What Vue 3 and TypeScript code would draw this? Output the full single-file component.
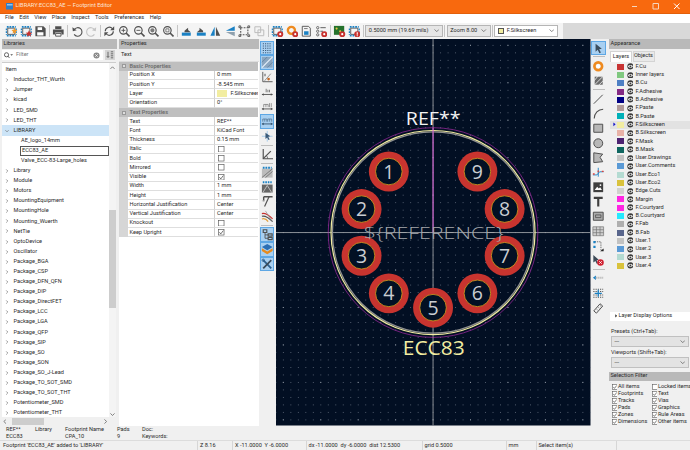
<script setup lang="ts">
type Shape = Record<string, string | number>
type Icon = { s: Shape[]; on?: boolean } | 'sep'

const BL = '#1a81c4'
const DK = '#505050'
const RD = '#c8322f'
const S = (d: string, stroke = DK, w = 1, extra: Shape = {}): Shape => ({ d, stroke, 'stroke-width': w, fill: 'none', ...extra })
const F = (d: string, fill = DK): Shape => ({ d, fill })
const circ = (cx: number, cy: number, r: number) => `M${cx - r} ${cy}a${r} ${r} 0 1 0 ${2 * r} 0a${r} ${r} 0 1 0 ${-2 * r} 0z`

const chip: Shape[] = [
  S('M3 3.5h8v7H3z', DK, 1),
  S('M2 2h10M2 12h10', BL, 2, { 'stroke-dasharray': '2 1' }),
  S('M1.5 4v7M12.5 4v7', BL, 1.4, { 'stroke-dasharray': '2 1' })
]
const badge = (c: string): Shape[] => [F(circ(10.3, 10.3, 3.4), c), F(circ(10.3, 10.3, 1.2), '#fff')]
const lens = (inner: Shape[] = []): Shape[] => [S(circ(6, 6, 4.2), DK, 1.3), S('M9 9l3.8 3.8', DK, 1.8), ...inner]
const plain = (s: Shape[]) => ({ s })

const topIcons: Icon[] = [
  plain([...chip, F('M10.5 3l1 2.3 2.3.4-1.7 1.6.4 2.4-2-1.2-2 1.2.4-2.4-1.7-1.6 2.3-.4z', '#ef9a2e')]),
  plain([...chip, F('M10 6l1.1 2.4 2.5.3-1.8 1.7.5 2.5-2.3-1.2-2.3 1.2.5-2.5-1.8-1.7 2.5-.3z', RD)]),
  plain([F('M1.5 1.5h9l2.5 2.5v8.5h-11.500z'), F('M4 2.500h5v3H4zM3.500 8h7v3.700h-7z', '#fff')]),
  'sep',
  plain([F('M3.500 1.500h7v3h-7zM1 5h12v5.500h-2.500v-2h-7v2H1z'), S('M4 9.500h6v3H4z', DK, 1)]),
  'sep',
  plain([S('M3.500 5a4.800 4.800 0 1 1 0 5.500', DK, 1.2), F('M1.500 2.500l.5 4.500 4.300-1.200z')]),
  plain([S('M10.500 5a4.800 4.800 0 1 0 0 5.500', '#c4c4c4', 1.2), F('M12.500 2.500l-.5 4.500-4.300-1.200z', '#c4c4c4')]),
  'sep',
  plain([S('M2.500 7a4.500 4.500 0 0 1 8-2.800', DK, 1.3), F('M12.500 1.500v4.500H8z'), S('M11.500 7a4.500 4.500 0 0 1-8 2.800', DK, 1.3), F('M1.500 12.500V8H6z')]),
  plain(lens([S('M3.800 6h4.400M6 3.800v4.400', DK, 1)])),
  plain(lens([S('M3.800 6h4.400', DK, 1)])),
  plain(lens([F(circ(6, 6, 2.4), '#7a7a7a')])),
  plain(lens([S('M4.300 4.300h3.400v3.400H4.300z', DK, .8)])),
  'sep',
  plain([F('M2 12V8.500h10V12z', BL), F('M5 6.500L9 3v2.500l3 2.500H5z', DK)]),
  plain([F('M2 12V8.500h10V12z', BL), F('M9 6.500L5 3v2.500L2 8h7z', DK)]),
  plain([F('M6.300 2v10H1.500z', BL), F('M7.700 2v10h4.800z', DK)]),
  plain([F('M2 6.300h10V1.500z', BL), F('M2 7.700h10v4.800z', '#8fa0ad')]),
  plain([S('M3 3h8v8H3z', DK, 1.2, { 'stroke-dasharray': '2 1.300' }), S('M1 1h2v2H1zM11 11h2v2h-2zM1 11h2v2H1zM11 1h2v2h-2z', DK, 1)]),
  plain([S('M2 2h6.500v6.500H2z', '#bdbdbd', 1.1), S('M5.500 5.500H12V12H5.500z', '#bdbdbd', 1.1)]),
  'sep',
  plain([...chip, ...badge(RD)]),
  plain([S(circ(6, 6, 4), '#ee8a1f', 2.6), ...badge(RD)]),
  plain([S('M2.500 1.500h7l2 2v9h-9z', DK, 1), F('M4.500 7h5v4h-5z', BL), S('M4.500 4h4', DK, .8)]),
  plain([S(circ(3, 3, 1.300), DK, .9), S(circ(3, 7, 1.300), DK, .9), S(circ(3, 11, 1.300), DK, .9), S('M6 3h6M6 7h3', DK, 1), ...badge(RD)]),
  'sep',
  plain([F('M1 1h11.500v10H1z', '#25722c'), F(circ(4, 4, 1.200), '#e8c64a'), F(circ(8, 7, 1.200), '#e8c64a'), ...badge(RD)]),
  plain([...chip, F(circ(10.3, 10.3, 3.4), RD), F('M9.700 8h1.200v2.800H9.700zM9.700 11.500h1.200v1H9.700z', '#fff')]),
  'sep'
]

const leftIcons: Icon[] = [
  { on: true, s: [S('M2 2h10M2 4.500h10M2 7h10M2 9.500h10M2 12h10', '#3d5a78', 1.3, { 'stroke-dasharray': '1.300 1.200' })] },
  { on: true, s: [F('M1 1h12v12H1z', '#8ba6c0'), S('M1 13L13 1', '#e8f2fb', 1.3), S('M1 7l6-6M7 13l6-6', '#5e7d9b', .8)] },
  plain([S('M2 1v11h11', DK, 1), S('M4 11L11 3', '#888', 1), F(circ(8.500, 9, 1.500), '#c46a28'), F('M3.500 3h2v3h-2z', '#9a9a9a')]),
  plain([S('M1 9.500h12', DK, 1), F('M1 9.500l2-1.500v3zM13 9.500l-2-1.500v3z'), F('M5.300 3h.9v4h-.9zM7.300 4.200h.9V7h-.9zM9 4.200h.9V7H9z', '#666')]),
  plain([S('M1 10h12', DK, 1), F('M1 10l2-1.500v3zM13 10l-2-1.500v3z'), S('M3 8V5h5v3M5.500 5v3M9.500 3.500V8M11.500 3.500V8', '#777', .8)]),
  { on: true, s: [S('M1 10h12', '#33526f', 1), F('M1 10l2-1.500v3zM13 10l-2-1.500v3z', '#33526f'), S('M2 7.500V4.500h4.500v3M4.200 4.500v3M7.500 7.500V4.500H12v3M9.700 4.500v3', '#577896', .9)] },
  plain([S('M7 1v12M1 7h12', '#8fc0e8', .8), F('M5 3l5.500 4-2.400.6 1.600 3-1.300.7-1.500-3L5 10z', '#3a5a78')]),
  'sep',
  plain([S('M2.500 1v11h11', DK, 1.300), S('M2.500 12L11 3.500', DK, 1.300), S('M7.500 12a5 5 0 0 0-1.500-3.500', DK, .8)]),
  'sep',
  plain([F('M1 3h12v10H1z', '#bcbcbc'), S('M2 2h10', BL, 2.400, { 'stroke-dasharray': '2 1' }), S('M1 13L13 3M5 13l8-7', '#555', .7)]),
  plain([S('M2 1.500h10', BL, 2.200, { 'stroke-dasharray': '1.800 1' }), F('M1 4h12v9H1z', '#666'), S('M2 13l5-8 5 8', '#ddd', .8)]),
  plain([S('M3 2h10M3 2v5', DK, 1.600), S('M9 2L4 13', DK, 1.300), S('M1 6.500h3', '#bbb', 1)]),
  plain([S('M1 4c4-1 8 2 12 6', RD, 1.300), S('M1 7c4-1 8 2 12 6', DK, 1.300), S('M1 10c3-1 5 0 7 3', '#e0a040', 1.300), S('M5 1l7 11', '#888', .7)]),
  'sep',
  { on: true, s: [S('M2.500 2h4v3h-4zM8 6.500h4.500v2.500H8zM8 10.500h4.500V13H8z', DK, 1.300), S('M4.500 5v6.500H8M4.500 7.700H8', DK, 1)] },
  { on: true, s: [F('M7 1l6 3.500-6 3.500-6-3.500z', '#2c6fb4'), F('M1 6l6 3.500L13 6v3l-6 3.500L1 9z', '#e78b1e')] },
  { on: true, s: [S('M2.500 2.500l9 9', '#2c5f8d', 2), S('M11.500 2.500l-9 9', '#3a4a58', 2), S(circ(2.500, 2.500, 1.300), '#2c5f8d', 1)] }
]

const rightIcons: Icon[] = [
  { on: true, s: [F('M4 2l7 5.500-3 .5 2 3.800-1.700.8-1.900-3.800L4 11z', '#3c4d5d')] },
  'sep',
  plain([S(circ(7, 7, 4.300), '#ee8a1f', 3), F(circ(7, 7, 2.300), '#fff')]),
  plain([F('M3 3h9v9H3z', '#6a6a6a'), S('M2 8l5-6M2 13L13 2M7 13l6-6', '#e8e8e8', 1)]),
  'sep',
  plain([S('M2 12L12 2', DK, 1.100)]),
  plain([S('M2.500 13C2.500 7 7 2.500 12.500 2.500', DK, 1.200)]),
  plain([F('M2 2.500h10v9H2z', '#b7b7b7'), S('M2 2.500h10v9H2z', DK, 1.100)]),
  plain([F(circ(7, 7, 5), '#b7b7b7'), S(circ(7, 7, 5), DK, 1.100)]),
  plain([F('M2 2l10 1.500-3 3.500 3 5-10 1z', '#b7b7b7'), S('M2 2l10 1.500-3 3.500 3 5-10 1z', DK, 1.100)]),
  plain([S('M1 10h4.500l3-3.500H13M7 2v10', BL, 1), S('M1 9h2M11 6h2M7 5v2', '#e0403a', 1.500)]),
  plain([F('M1.500 1.500h11v11h-11z', '#3f3f3f'), F('M3 10l2.800-3.500 1.800 2 1.500-1.500 2 3z', '#fff'), F(circ(9.500, 4.500, 1), '#fff')]),
  plain([F('M2 2h10v2.500H8.200V13H5.800V4.500H2z', '#3f3f3f')]),
  plain([F('M1.500 2.500h11v9h-11z', '#aaa'), S('M1.500 2.500h11v9h-11z', DK, 1.100), S('M4 5.500h6v3H4z', DK, .9)]),
  plain([F('M1 2h12v10H1z', '#cfcfcf'), S('M1 2h12v10H1zM1 5.300h12M1 8.600h12M5 2v10M9 2v10', '#777', .8)]),
  plain([S('M3 2h7v9', DK, .9, { 'stroke-dasharray': '1.500 1' }), F('M1.500 1h2.500v2.500H1.500zM1.500 6.500h2.500V9H1.500z', BL), F('M9 12.500l4-3v3z', '#222')]),
  plain([F('M1.500 1l6 5.500-2.300.5 1.600 3.500-1.500.5-1.500-3.300-2.300 1.800z', '#3d4a57'), F(circ(9.500, 9.500, 3.700), '#d02030'), S('M8 8l3 3M11 8l-3 3', '#fff', .9)]),
  'sep',
  plain([F('M1 6.500l3.500-2.500v5z', BL), S('M4 6.500h9', '#bbb', 2.200, { 'stroke-dasharray': '1.500 .7' })]),
  plain([S('M1.500 2.500h11M1.500 5h11M1.500 9h11M1.500 11.500h11', DK, 1.200, { 'stroke-dasharray': '1.300 1.200' }), S('M7 3v8M3 7h8', BL, 1.400)]),
  plain([S('M2 10l7-8 3 2.500-7 8z', DK, 1.100), S('M5 8l1.300 1M7 6l1.300 1M9 4l1.300 1', DK, .7)])
]

const treeItems = [
  ['Inductor_THT_Wurth'], ['Jumper'], ['kicad'], ['LED_SMD'], ['LED_THT'], ['LIBRARY', 'sel'],
  ['AE_logo_14mm', 'child'], ['ECC83_AE', 'edit'], ['Valve_ECC-83-Large_holes', 'child'],
  ['Library'], ['Module'], ['Motors'], ['MountingEquipment'], ['MountingHole'], ['Mounting_Wuerth'], ['NetTie'],
  ['OptoDevice'], ['Oscillator'], ['Package_BGA'], ['Package_CSP'], ['Package_DFN_QFN'], ['Package_DIP'],
  ['Package_DirectFET'], ['Package_LCC'], ['Package_LGA'], ['Package_QFP'], ['Package_SIP'], ['Package_SO'],
  ['Package_SON'], ['Package_SO_J-Lead'], ['Package_TO_SOT_SMD'], ['Package_TO_SOT_THT'], ['Potentiometer_SMD'], ['Potentiometer_THT']
]

type Row = { k: string; v?: string; head?: boolean; cb?: boolean; on?: boolean; swatch?: boolean }
const propRows: Row[] = [
  { k: 'Basic Properties', head: true },
  { k: 'Position X', v: '0 mm' },
  { k: 'Position Y', v: '-8.545 mm' },
  { k: 'Layer', v: 'F.Silkscreen', swatch: true },
  { k: 'Orientation', v: '0°' },
  { k: 'Text Properties', head: true },
  { k: 'Text', v: 'REF**' },
  { k: 'Font', v: 'KiCad Font' },
  { k: 'Thickness', v: '0.15 mm' },
  { k: 'Italic', cb: true },
  { k: 'Bold', cb: true },
  { k: 'Mirrored', cb: true },
  { k: 'Visible', cb: true, on: true },
  { k: 'Width', v: '1 mm' },
  { k: 'Height', v: '1 mm' },
  { k: 'Horizontal Justification', v: 'Center' },
  { k: 'Vertical Justification', v: 'Center' },
  { k: 'Knockout', cb: true },
  { k: 'Keep Upright', cb: true, on: true }
]

const layers = [
  ['F.Cu', '#c83434'], ['Inner layers', '#7fc87f'], ['B.Cu', '#4d7fc4'], ['F.Adhesive', '#842a84'], ['B.Adhesive', '#000084'],
  ['F.Paste', '#b09a9a'], ['B.Paste', '#00b0b8'], ['F.Silkscreen', '#f2eda1'], ['B.Silkscreen', '#e8b2a7'], ['F.Mask', '#4d2372'],
  ['B.Mask', '#0f6660'], ['User.Drawings', '#c2c2c2'], ['User.Comments', '#5a9ad6'], ['User.Eco1', '#b4dbd2'], ['User.Eco2', '#d9c23c'],
  ['Edge.Cuts', '#d0d2cd'], ['Margin', '#ff26e2'], ['F.Courtyard', '#ff26e2'], ['B.Courtyard', '#26e9ff'], ['F.Fab', '#afafaf'],
  ['B.Fab', '#58658c'], ['User.1', '#c2c2c2'], ['User.2', '#5a9ad6'], ['User.3', '#b4dbd2'], ['User.4', '#d9c23c']
]

const filters: [string, boolean][] = [
  ['All items', true], ['Locked items', false], ['Footprints', true], ['Text', true], ['Tracks', true], ['Vias', true],
  ['Pads', true], ['Graphics', true], ['Zones', true], ['Rule Areas', true], ['Dimensions', true], ['Other items', true]
]

const pads = [
  ['1', 388, 171.7], ['2', 360.7, 209.3], ['3', 360.7, 256], ['4', 388, 293.7], ['5', 432.3, 308],
  ['6', 476.7, 293.7], ['7', 504, 256], ['8', 504, 209.3], ['9', 476.7, 171.7]
] as [string, number, number][]

const menus = ['File', 'Edit', 'View', 'Place', 'Inspect', 'Tools', 'Preferences', 'Help']
const statusCells = [
  ['s1', "Footprint 'ECC83_AE' added to 'LIBRARY'"], ['s2', 'Z 8.16'], ['s3', 'X -11.0000  Y -6.0000'],
  ['s4', 'dx -11.0000  dy -6.0000  dist 12.5300'], ['s5', 'grid 0.5000'], ['s6', 'mm'], ['s7', 'Select item(s)'], ['s8', '']
]
</script>

<template>
  <div class="app">
    <header class="title">
      <svg class="winicon" viewBox="0 0 8 7"><path d="M0 0h8v7H0z" fill="#2f7fc9" /><path d="M1 1.500h6v1H1z" fill="#dfeefa" /></svg>
      <span class="title-text">LIBRARY:ECC83_AE — Footprint Editor</span>
      <svg class="winbtns" viewBox="0 0 50 8">
        <path d="M0 4.500h5" stroke="#f6d5bd" fill="none" />
        <path d="M21 1.500h5.500v5.500H21z" stroke="#f6d5bd" fill="none" />
        <path d="M42 1.500l5.500 5.500M47.500 1.500L42 7" stroke="#fff" fill="none" />
      </svg>
    </header>

    <nav class="menu"><span v-for="m in menus" :key="m">{{ m }}</span></nav>

    <div class="toolbar">
      <div class="tools">
        <template v-for="(ic, i) in topIcons" :key="i">
          <i v-if="ic === 'sep'" class="vsep"></i>
          <svg v-else class="tico" viewBox="0 0 14 14"><path v-for="(p, j) in ic.s" :key="j" v-bind="p" /></svg>
        </template>
        <div class="combo grey c1"><span>0.5000 mm (19.69 mils)</span><svg class="chev" viewBox="0 0 6 4"><path d="M.5.500L3 3 5.500.500" fill="none" stroke="#555" stroke-width=".8" /></svg></div>
        <i class="vsep tight"></i>
        <div class="combo grey c2"><span>Zoom 8.00</span><svg class="chev" viewBox="0 0 6 4"><path d="M.5.500L3 3 5.500.500" fill="none" stroke="#555" stroke-width=".8" /></svg></div>
        <i class="vsep tight"></i>
        <div class="combo c3"><i class="lsw"></i><span>F.Silkscreen</span><svg class="chev" viewBox="0 0 6 4"><path d="M.5.500L3 3 5.500.500" fill="none" stroke="#555" stroke-width=".8" /></svg></div>
      </div>
      <div class="tool-rest"></div>
    </div>

    <main class="main">
      <section class="libs">
        <h2 class="strip">Libraries</h2>
        <div class="filter">
          <div class="search">
            <svg class="mag" viewBox="0 0 10 7"><path d="M.5 3a2.300 2.300 0 1 0 4.600 0a2.300 2.300 0 1 0-4.600 0M4.500 4.500L6 6.500" fill="none" stroke="#444" stroke-width=".9" /><path d="M7 2.500h3L8.500 4z" fill="#555" /></svg>
            <span class="ph">Filter</span>
            <svg class="clr" viewBox="0 0 8 8"><circle cx="4" cy="4" r="3.500" fill="#8a8a8a" /><path d="M2.500 2.500l3 3M5.500 2.500l-3 3" stroke="#fff" stroke-width=".8" /></svg>
          </div>
          <div class="fbtn"><svg viewBox="0 0 10 10"><path d="M2.500 1v7M1 6.500L2.500 8 4 6.500M6 1h3M6 3.500h3M6 6h3M6 8.500h3" stroke="#444" fill="none" stroke-width=".9" /></svg></div>
        </div>
        <div class="tree">
          <div class="tree-body">
            <div class="tree-list">
              <div class="titem head">Item</div>
              <div v-for="t in treeItems" :key="t[0]" class="titem" :class="t[1]">
                <svg v-if="!t[1] || t[1] === 'sel'" class="tw" viewBox="0 0 5 5"><path :d="t[1] === 'sel' ? 'M.5 1.500L2.500 3.500 4.500 1.500' : 'M1.500.5L3.500 2.500 1.500 4.500'" fill="none" stroke="#555" stroke-width=".7" /></svg>
                <span>{{ t[0] }}</span>
              </div>
            </div>
            <div class="vscroll">
              <svg viewBox="0 0 6 4" class="arr"><path d="M.5 3.500L3 1l2.500 2.500" fill="none" stroke="#444" stroke-width=".8" /></svg>
              <i class="vthumb"></i>
              <svg viewBox="0 0 6 4" class="arr"><path d="M.5.500L3 3l2.500-2.500" fill="none" stroke="#444" stroke-width=".8" /></svg>
            </div>
          </div>
          <div class="hscroll">
            <svg viewBox="0 0 4 6" class="harr"><path d="M3.500.5L1 3l2.500 2.500" fill="none" stroke="#444" stroke-width=".8" /></svg>
            <i class="hthumb"></i>
            <svg viewBox="0 0 4 6" class="harr"><path d="M.5.500L3 3 .5 5.500" fill="none" stroke="#444" stroke-width=".8" /></svg>
          </div>
        </div>
      </section>

      <section class="props">
        <h2 class="strip">Properties</h2>
        <div class="ptitle">Text</div>
        <div class="pgrid">
          <div v-for="r in propRows" :key="r.k" class="prow" :class="{ phead: r.head }">
            <template v-if="r.head">
              <i class="minus"></i><span>{{ r.k }}</span>
            </template>
            <template v-else>
              <span class="pk">{{ r.k }}</span>
              <span class="pv">
                <i v-if="r.swatch" class="psw"></i>
                <svg v-if="r.cb" class="cb" viewBox="0 0 7 7"><rect x=".5" y=".5" width="6" height="6" fill="#fff" stroke="#555" stroke-width=".7" /><path v-if="r.on" d="M1.500 3.500l1.500 1.800 2.700-3.600" fill="none" stroke="#444" stroke-width=".8" /></svg>
                <template v-else>{{ r.v }}</template>
              </span>
            </template>
          </div>
        </div>
      </section>

      <aside class="vtools">
        <template v-for="(ic, i) in leftIcons" :key="i">
          <i v-if="ic === 'sep'" class="hsep"></i>
          <div v-else class="vbtn" :class="{ on: ic.on }"><svg viewBox="0 0 14 14"><path v-for="(p, j) in ic.s" :key="j" v-bind="p" /></svg></div>
        </template>
      </aside>

      <svg class="canvas" viewBox="275 39 315 387" preserveAspectRatio="none">
        <defs>
          <pattern id="minor" width="7.5" height="7.5" patternUnits="userSpaceOnUse" patternTransform="translate(431.900 232.400)"><rect width=".9" height=".9" fill="#5d6878" /></pattern>
          <pattern id="major" width="37.5" height="37.500" patternUnits="userSpaceOnUse" patternTransform="translate(431.800 232.300)"><rect width="1" height="1" fill="#8f98a3" /></pattern>
        </defs>
        <rect x="275" y="39" width="315" height="387" fill="#020f23" />
        <rect x="275" y="39" width="315" height="387" fill="url(#minor)" />
        <rect x="275" y="39" width="315" height="387" fill="url(#major)" />
        <path d="M275 232.800H590M432.300 39V426" stroke="#9a9ea4" stroke-width=".9" fill="none" />
        <circle cx="432.300" cy="232.800" r="105" fill="none" stroke="#a52aa5" stroke-width=".7" />
        <circle cx="432.300" cy="232.800" r="100.800" fill="none" stroke="#8f9090" stroke-width="1.300" />
        <circle cx="432.300" cy="232.800" r="102.200" fill="none" stroke="#f2eda1" stroke-width="1.200" />
        <path d="M432.300 128V232.800" stroke="#d050d0" stroke-width="1" fill="none" />
        <g v-for="p in pads" :key="p[0]">
          <circle :cx="p[1]" :cy="p[2]" r="20" fill="#c8342f" />
          <circle :cx="p[1]" :cy="p[2]" r="13.300" fill="#021024" stroke="#dca01e" stroke-width=".8" />
          <text :x="p[1]" :y="p[2] + 7" class="padnum" text-anchor="middle">{{ p[0] }}</text>
        </g>
        <text x="433" y="232.800" dy="6.300" class="reftext" text-anchor="middle" textLength="140" lengthAdjust="spacingAndGlyphs">${REFERENCE}</text>
        <text x="432.500" y="125" class="refstar" text-anchor="middle" textLength="55" lengthAdjust="spacingAndGlyphs">REF**</text>
        <text x="433" y="355" class="ecc" text-anchor="middle" textLength="62" lengthAdjust="spacingAndGlyphs">ECC83</text>
      </svg>

      <aside class="vtools right">
        <template v-for="(ic, i) in rightIcons" :key="i">
          <i v-if="ic === 'sep'" class="hsep"></i>
          <div v-else class="vbtn" :class="{ on: ic.on }"><svg viewBox="0 0 14 14"><path v-for="(p, j) in ic.s" :key="j" v-bind="p" /></svg></div>
        </template>
      </aside>

      <section class="appear">
        <h2 class="strip">Appearance</h2>
        <div class="tabs"><span class="tab act">Layers</span><span class="tab">Objects</span></div>
        <div class="layers">
          <div v-for="l in layers" :key="l[0]" class="lrow" :class="{ cur: l[0] === 'F.Silkscreen' }">
            <svg class="cursor" viewBox="0 0 4 6"><path v-if="l[0] === 'F.Silkscreen'" d="M.5.500L3.500 3 .5 5.500z" fill="#1414c8" /></svg>
            <i class="sw" :style="{ background: l[1] }"></i>
            <svg class="eye" viewBox="0 0 8 8"><circle cx="4" cy="4" r="3.600" fill="#3a3a3a" /><path d="M1 4c1.500-2 4.500-2 6 0-1.500 2-4.500 2-6 0z" fill="#eee" /><circle cx="4" cy="4" r="1.100" fill="#3a3a3a" /></svg>
            <span>{{ l[0] }}</span>
          </div>
        </div>
        <div class="ldo"><svg viewBox="0 0 4 6"><path d="M.5.500L3.500 3 .5 5.500z" fill="#222" /></svg><span>Layer Display Options</span></div>
        <div class="presets">
          <label>Presets (Ctrl+Tab):</label>
          <div class="pcombo"><span>---</span><svg class="chev" viewBox="0 0 6 4"><path d="M.5.500L3 3 5.500.500" fill="none" stroke="#555" stroke-width=".8" /></svg></div>
          <label>Viewports (Shift+Tab):</label>
          <div class="pcombo"><span>---</span><svg class="chev" viewBox="0 0 6 4"><path d="M.5.500L3 3 5.500.500" fill="none" stroke="#555" stroke-width=".8" /></svg></div>
        </div>
        <h2 class="strip sf">Selection Filter</h2>
        <div class="fgrid">
          <div v-for="f in filters" :key="f[0]" class="fitem">
            <svg class="cb small" viewBox="0 0 7 7"><rect x=".5" y=".5" width="6" height="6" fill="#fff" stroke="#555" stroke-width=".7" /><path v-if="f[1]" d="M1.500 3.500l1.500 1.800 2.700-3.600" fill="none" stroke="#444" stroke-width=".8" /></svg>
            <span>{{ f[0] }}</span>
          </div>
        </div>
      </section>
    </main>

    <div class="info">
      <div class="icol w29"><span>REF**</span><span>ECC83</span></div>
      <div class="icol w30"><span>Library</span><span></span></div>
      <div class="icol w52"><span>Footprint Name</span><span>CPA_10</span></div>
      <div class="icol w25"><span>Pads</span><span>9</span></div>
      <div class="icol"><span>Doc:</span><span>Keywords:</span></div>
    </div>

    <footer class="status">
      <span v-for="c in statusCells" :key="c[0]" class="scell" :class="c[0]">{{ c[1] }}</span>
    </footer>
  </div>
</template>

<style>
html, body { margin: 0; padding: 0; background: #f0f0f0; }
</style>

<style scoped>
.app { width: 690px; height: 450px; overflow: hidden; display: flex; flex-direction: column; background: #f0f0f0; font-family: Roboto, "Noto Sans", sans-serif; font-size: 5.600px; color: #2a2a2a; line-height: 1; }
h2 { margin: 0; font: inherit; }
i { font-style: normal; display: block; flex: none; }
svg { display: block; flex: none; }

.title { height: 13.500px; flex: none; background: #f8690e; display: flex; align-items: center; padding-left: 5.500px; color: #fbe6d8; border-bottom: .5px solid #e25f0b; box-sizing: border-box; }
.winicon { width: 7.500px; height: 6.500px; margin-right: 2.500px; }
.title-text { flex: 1; font-size: 5.700px; }
.winbtns { width: 50px; height: 8px; margin-right: 8px; }

.menu { height: 9.500px; flex: none; background: #fff; display: flex; align-items: center; gap: 5.500px; padding-left: 5px; font-size: 5.600px; }

.toolbar { height: 16px; flex: none; display: flex; background: #d9d9d9; }
.tools { width: 563px; flex: none; display: flex; align-items: center; padding-left: 4px; box-sizing: border-box; background: #f4f4f4; }
.tool-rest { flex: 1; }
.tico { width: 12.500px; height: 12.500px; padding: 0 1.050px; }
.vsep { width: 1px; height: 12px; margin: 0 1.300px; background: #c4c4c4; }
.vsep.tight { margin: 0 1px 0 1px; }
.combo { height: 11.500px; display: flex; align-items: center; justify-content: space-between; padding: 0 3px 0 2.500px; box-sizing: border-box; border: .5px solid #b5b5b5; background: #fff; font-size: 5.600px; margin-left: .5px; }
.combo.grey { background: #e6e6e6; }
.c1 { width: 78px; }
.c2 { width: 44px; }
.c3 { width: 64px; justify-content: flex-start; }
.c3 .chev { margin-left: auto; }
.lsw { width: 6.500px; height: 6.500px; background: #f2eda1; border: .5px solid #555; margin-right: 2.500px; box-sizing: border-box; }
.chev { width: 5.500px; height: 3.500px; }

.main { flex: 1; min-height: 0; display: flex; }

.strip { height: 9.500px; flex: none; background: #b9b9b9; display: flex; align-items: center; padding-left: 2px; font-size: 5.600px; color: #2a2a2a; }

.libs { width: 116.500px; flex: none; display: flex; flex-direction: column; padding-left: 1.500px; box-sizing: border-box; }
.filter { height: 13px; flex: none; display: flex; align-items: center; gap: 1.500px; }
.search { width: 101.500px; height: 10.500px; background: #fff; display: flex; align-items: center; padding: 0 3px 0 2.500px; box-sizing: border-box; }
.mag { width: 9px; height: 6.500px; margin-right: 3px; }
.ph { flex: 1; color: #777; }
.clr { width: 7px; height: 7px; }
.fbtn { width: 10px; height: 10.500px; background: #d4d4d4; display: flex; align-items: center; justify-content: center; }
.fbtn svg { width: 8px; height: 8px; }
.tree { flex: 1; min-height: 0; background: #fff; margin-right: .5px; display: flex; flex-direction: column; border-top: .5px solid #ccc; }
.tree-body { flex: 1; min-height: 0; display: flex; }
.tree-list { flex: 1; min-width: 0; padding-top: 2.400px; overflow: hidden; }
.titem { height: 10.100px; display: flex; align-items: center; padding-left: 3.500px; white-space: nowrap; box-sizing: border-box; }
.titem.head { padding-left: 4px; }
.tw { width: 4px; height: 4px; margin-right: 4.500px; }
.titem.sel { background: #cce4f7; }
.titem.child, .titem.edit { padding-left: 19.500px; }
.titem.edit { margin-left: 18.500px; padding-left: 1px; border: .6px solid #555; }
.vscroll { width: 7.500px; flex: none; display: flex; flex-direction: column; align-items: center; background: #f4f4f4; padding: 3px 0 1px; box-sizing: border-box; }
.arr { width: 5px; height: 3.300px; flex: none; }
.vthumb { width: 6.500px; height: 98px; background: #cdcdcd; margin-top: 141px; margin-bottom: auto; }
.hscroll { height: 8.500px; flex: none; background: #f0f0f0; display: flex; align-items: center; padding: 0 9px 0 1px; }
.harr { width: 3.500px; height: 5px; }
.hthumb { width: 32px; height: 7.500px; background: #cdcdcd; margin: 0 auto 0 6px; }

.props { width: 139.500px; flex: none; margin-left: 2.500px; display: flex; flex-direction: column; }
.ptitle { height: 13.200px; flex: none; display: flex; align-items: center; padding-left: 2px; background: #efefef; border-bottom: .5px solid #ddd; box-sizing: border-box; }
.pgrid { flex: 1; min-height: 0; background: #fff; padding-right: 1px; }
.prow { height: 9.250px; display: flex; align-items: stretch; background: #d6d6d6; padding-left: 8.500px; box-sizing: border-box; }
.pk { width: 87.500px; flex: none; background: #fff; display: flex; align-items: center; padding-left: 2px; box-sizing: border-box; border-bottom: .5px solid #dedede; border-right: .5px solid #cfcfcf; white-space: nowrap; }
.pv { flex: 1; min-width: 0; background: #fff; display: flex; align-items: center; padding-left: 2px; border-bottom: .5px solid #dedede; white-space: nowrap; overflow: hidden; }
.phead { background: #bfbfbf; padding-left: 2.500px; align-items: center; color: #6c6c6c; font-weight: 600; }
.minus { width: 4px; height: 4px; background: #dedede; margin-right: 4px; border: .5px solid #999; box-sizing: border-box; }
.psw { width: 10px; height: 7.500px; background: #f2eda1; margin-right: 3.500px; }
.cb { width: 6.500px; height: 6.500px; margin-left: 1px; }

.vtools { width: 17.500px; flex: none; display: flex; flex-direction: column; align-items: center; padding: 1.500px 1px 0 0; box-sizing: border-box; background: #f0f0f0; }
.vbtn { width: 14.500px; height: 14.700px; flex: none; display: flex; align-items: center; justify-content: center; box-sizing: border-box; }
.vbtn svg { width: 12.500px; height: 12.500px; }
.vbtn.on { background: #a9d0f1; border: .7px solid #5ea7e4; }
.hsep { width: 12px; height: 1px; margin: 1.250px 0; background: #bdbdbd; }
.right { width: 15px; padding-right: 0; margin-left: .5px; }

.canvas { width: 314.500px; flex: none; height: 100%; }
.padnum { font: 400 19.500px "Open Sans", sans-serif; fill: #c9cdd2; }
.reftext { font: 300 17px "Open Sans", sans-serif; fill: #a6a9ad; }
.refstar { font: 400 18px "Open Sans", sans-serif; fill: #f4f4f4; }
.ecc { font: 400 19.500px "Open Sans", sans-serif; fill: #f2eda1; }

.appear { width: 83px; flex: none; margin-left: 2.500px; display: flex; flex-direction: column; }
.tabs { height: 14px; flex: none; display: flex; align-items: flex-start; padding: 2.500px 0 0 1.500px; gap: .5px; box-sizing: border-box; }
.tab { height: 10.500px; width: 22px; display: flex; align-items: center; justify-content: center; background: #e9e9e9; border: .4px solid #d4d4d4; box-sizing: border-box; }
.tab.act { background: #fff; border-bottom: 0; }
.layers { flex: 1; min-height: 0; margin-left: 1.500px; }
.lrow { height: 8.300px; display: flex; align-items: center; padding-left: 2.500px; box-sizing: border-box; }
.lrow.cur { background: #e2e2e2; }
.cursor { width: 3px; height: 4.500px; margin-right: 1.800px; }
.sw { width: 7px; height: 6px; margin-right: 2.300px; }
.eye { width: 6.800px; height: 6.800px; margin-right: 2px; }
.ldo { height: 9px; flex: none; background: #fff; margin-left: 1px; display: flex; align-items: center; padding-left: 5px; font-size: 5.600px; }
.ldo svg { width: 2.500px; height: 3.800px; margin-right: 1.500px; }
.presets { height: 51px; flex: none; display: flex; flex-direction: column; padding: 8.500px 2.500px 0 2.500px; box-sizing: border-box; }
.presets label { height: 6px; display: flex; align-items: center; margin-bottom: 1px; white-space: nowrap; }
.pcombo { height: 11px; flex: none; margin: 0 .5px 3px 0; background: #e3e3e3; border: .5px solid #c0c0c0; box-sizing: border-box; display: flex; align-items: center; justify-content: space-between; padding: 0 2.500px 0 2.500px; }
.sf { margin-bottom: 2.500px; }
.fgrid { display: grid; grid-template-columns: 40px 1fr; padding-left: 3px; }
.fitem { height: 7px; display: flex; align-items: center; white-space: nowrap; }
.cb.small { width: 5.800px; height: 5.800px; margin: 0 .6px 0 0; }

.info { height: 14.500px; flex: none; display: flex; padding: 1.300px 0 0 6px; box-sizing: border-box; background: #f0f0f0; }
.icol { display: flex; flex-direction: column; gap: 1.700px; }
.icol span { height: 5.800px; display: block; }
.w29 { width: 29px; }
.w30 { width: 30px; }
.w52 { width: 52px; }
.w25 { width: 25px; }

.status { height: 10px; flex: none; display: flex; align-items: center; border-top: .5px solid #dcdcdc; box-sizing: border-box; background: #f0f0f0; }
.scell { height: 100%; display: flex; align-items: center; padding-left: 2px; box-sizing: border-box; border-right: .5px solid #d6d6d6; white-space: pre; flex: none; }
.s1 { width: 198px; padding-left: 3px; }
.s2 { width: 35px; }
.s3 { width: 73.500px; }
.s4 { width: 116px; }
.s5 { width: 84px; }
.s6 { width: 30px; }
.s7 { width: 80px; }
.s8 { flex: 1; border-right: 0; }
</style>
